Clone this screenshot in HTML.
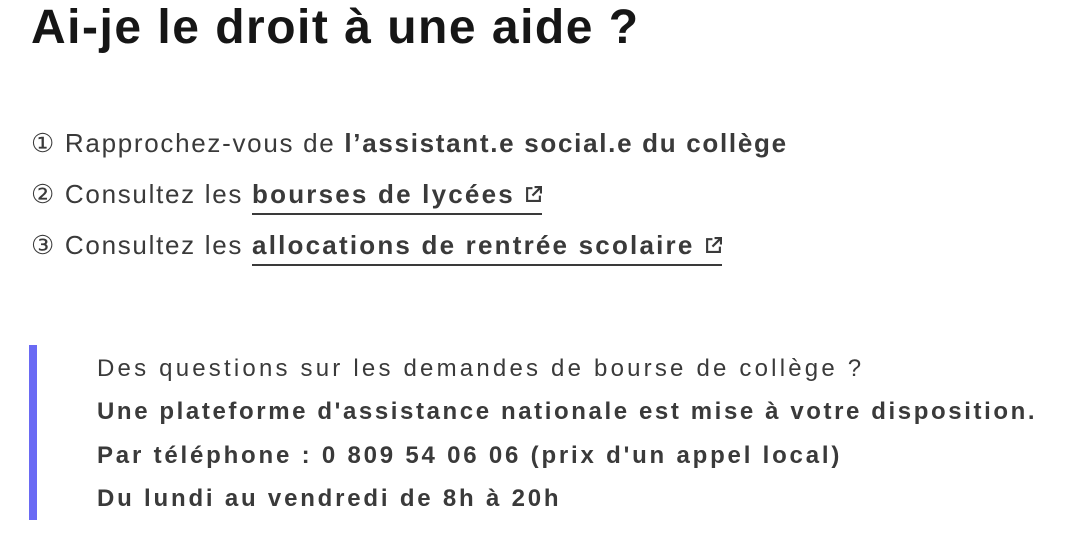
<!DOCTYPE html>
<html><head><meta charset="utf-8"><style>
body{margin:0;width:1066px;height:548px;background:#fff;font-family:"Liberation Sans",sans-serif;color:#3a3a3a;overflow:hidden;position:relative}
h1{position:absolute;left:31px;top:0px;margin:0;font-size:48px;letter-spacing:1.5px;font-weight:bold;color:#161616;white-space:nowrap}
.li{position:absolute;left:31px;font-size:26px;letter-spacing:1.7px;white-space:nowrap}
a{color:#3a3a3a;text-decoration:none;font-weight:bold;border-bottom:2px solid #3a3a3a;padding-bottom:4px;letter-spacing:2.2px}
.bar{position:absolute;left:29px;top:345px;width:8px;height:175px;background:#6a6af4}
.q{position:absolute;left:97px;font-size:24px;white-space:nowrap}
.ext{display:inline-block;width:17px;height:17px;margin-left:10px;vertical-align:0}
</style></head><body>
<h1>Ai-je le droit à une aide ?</h1>
<div class="li" style="top:128px">① Rapprochez-vous de <b>l’assistant.e social.e du collège</b></div>
<div class="li" style="top:179px">② Consultez les <a>bourses de lycées<svg class="ext" viewBox="0 0 16 16"><path d="M7 2H2v12h12V9" fill="none" stroke="#3a3a3a" stroke-width="2"/><path d="M9 1h6v6M15 1L7 9" fill="none" stroke="#3a3a3a" stroke-width="2"/></svg></a></div>
<div class="li" style="top:230px">③ Consultez les <a>allocations de rentrée scolaire<svg class="ext" viewBox="0 0 16 16"><path d="M7 2H2v12h12V9" fill="none" stroke="#3a3a3a" stroke-width="2"/><path d="M9 1h6v6M15 1L7 9" fill="none" stroke="#3a3a3a" stroke-width="2"/></svg></a></div>
<div class="bar"></div>
<div class="q" style="top:355px;letter-spacing:3.2px">Des questions sur les demandes de bourse de collège ?</div>
<div class="q" style="top:398px;font-weight:bold;letter-spacing:2.6px">Une plateforme d'assistance nationale est mise à votre disposition.</div>
<div class="q" style="top:442px;font-weight:bold;letter-spacing:2.8px">Par téléphone : 0 809 54 06 06 (prix d'un appel local)</div>
<div class="q" style="top:485px;font-weight:bold;letter-spacing:2.8px">Du lundi au vendredi de 8h à 20h</div>
</body></html>
